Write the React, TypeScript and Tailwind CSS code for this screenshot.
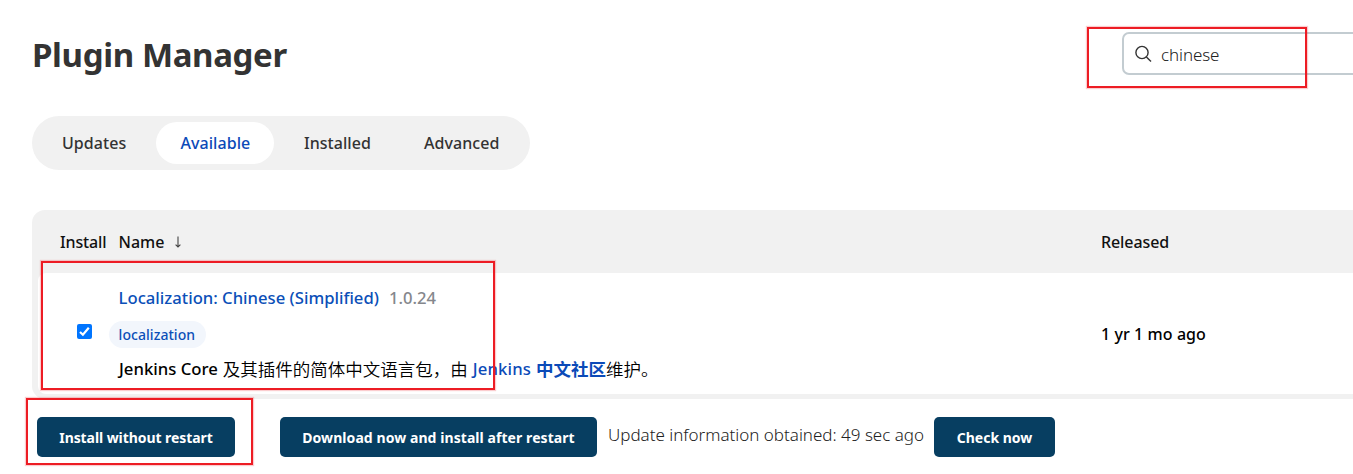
import React from "react";

const tabs = [
  { label: "Updates", active: false, box: "w-[124px] pl-[30px]" },
  { label: "Available", active: true, box: "w-[118px] pl-[24.5px]" },
  { label: "Installed", active: false, box: "w-[125px] pl-[30px]" },
  { label: "Advanced", active: false, box: "w-[131px] pl-[25px]" },
];

function SearchIcon() {
  return (
    <svg className="h-[18px] w-[18px] shrink-0" viewBox="0 0 18 18" fill="none" stroke="#333" strokeWidth="1.4">
      <circle cx="7" cy="7.5" r="6.1" />
      <path d="M11.4 11.9 L16 16.4" />
    </svg>
  );
}

function SortArrow() {
  return (
    <svg className="ml-[10px] h-[12px] w-[8px]" viewBox="0 0 8 12" fill="none" stroke="#444" strokeWidth="1.1">
      <path d="M4 0.5 V11 M1.6 8.6 L4 11 L6.4 8.6" />
    </svg>
  );
}

function CheckBox() {
  return (
    <svg className="h-[15px] w-[15px]" viewBox="0 0 15 15" role="img" aria-label="Selected">
      <rect width="15" height="15" rx="2" fill="#0075ff" />
      <path d="M3 8 L5.9 10.7 L11.8 3.7" fill="none" stroke="#fff" strokeWidth="2.2" />
    </svg>
  );
}

function Button({ children, className }: { children: React.ReactNode; className: string }) {
  return (
    <button className={`flex h-10 shrink-0 items-center justify-center rounded-[5px] bg-[#073e61] text-[14px] font-bold whitespace-nowrap text-white ${className}`}>
      {children}
    </button>
  );
}

function Highlight({ className }: { className: string }) {
  return <div className={`absolute border-2 border-[#ed1c24] shadow-[0_0_1px_1px_rgba(237,28,36,0.22)] ${className}`} />;
}

export default function App() {
  return (
    <div className="relative h-[474px] w-[1353px] overflow-hidden bg-white font-['Noto_Sans','Noto_Sans_CJK_SC',sans-serif] whitespace-nowrap text-[#333]">
      <header className="flex h-[116px] justify-between pl-[32px]">
        <h1 className="pt-[31px] text-[33px] leading-[48px] font-bold tracking-[-0.37px]">Plugin Manager</h1>
        <div className="mt-[32px] -mr-3 flex h-[43px] w-[243px] items-center rounded-[7px] border-2 border-[#c3ccd1] pl-[11px]">
          <SearchIcon />
          <span className="ml-[8px] pt-[2px] text-[17px] font-[350] tracking-[-0.1px] text-[#222]">chinese</span>
        </div>
      </header>

      <nav className="ml-[32px] flex h-[54px] w-[498px] items-center rounded-full bg-[#f1f1f1]">
        {tabs.map((t) => (
          <a key={t.label} className={`flex h-[42px] items-center rounded-full text-[16px] font-medium tracking-[0.05px] ${t.box} ${t.active ? "bg-white text-[#0b4ab8]" : ""}`}>
            {t.label}
          </a>
        ))}
      </nav>

      <section className="mt-[40px] ml-[32px] h-[189px] w-[1400px] rounded-[13px] bg-[#f1f1f1] pb-[5px] text-[16px] font-medium text-black">
        <div className="flex h-[63px] items-center pl-[28px] text-[#111]">
          <span className="w-[58.5px] tracking-[-0.15px]">Install</span>
          <span className="flex w-[982.5px] items-center">Name<SortArrow /></span>
          <span className="tracking-[-0.1px]">Released</span>
        </div>
        <div className="ml-[6px] flex h-[121px] rounded-[8px] bg-white">
          <div className="w-[71px] pt-[51px] pl-[39px]"><CheckBox /></div>
          <div className="w-[992px]">
            <div className="flex h-[50px] items-center pl-[9.6px] text-[16.65px]">
              <a className="text-[#0b4fb8]">Localization: Chinese (Simplified)</a>
              <span className="ml-[10px] text-[#85878c]">1.0.24</span>
            </div>
            <div className="-mt-[2px] flex h-[27px] w-[97px] items-center rounded-full bg-[#f2f6fc] pl-[9.6px] text-[14px] tracking-[0.05px] text-[#0b4fb8]">localization</div>
            <p className="flex h-[42px] items-center pl-[10px] text-[16.7px] leading-[24px]">
              <span>Jenkins Core</span>
              <span className="ml-[5px] text-[17.5px] font-[350]">及其插件的简体中文语言包，由</span>
              <a className="ml-[5px] tracking-[0.15px] text-[#0b4ab8]">Jenkins</a>
              <a className="ml-[5px] text-[17.5px] font-bold text-[#0b4ab8]">中文社区</a>
              <span className="text-[17.5px] font-[350]">维护。</span>
            </p>
          </div>
          <span className="pt-[49px] tracking-[0.08px]">1 yr 1 mo ago</span>
        </div>
      </section>

      <footer className="mt-[18px] flex pl-[37px]">
        <Button className="w-[198px] tracking-[-0.07px]">Install without restart</Button>
        <Button className="ml-[45px] w-[317px] tracking-[0.07px]">Download now and install after restart</Button>
        <span className="ml-[11px] w-[326px] pt-[5px] text-[17px] leading-[26px] font-[350] tracking-[-0.01px] text-[#222]">Update information obtained: 49 sec ago</span>
        <Button className="w-[121px]">Check now</Button>
      </footer>

      <Highlight className="top-[27px] left-[1087px] h-[61px] w-[220px]" />
      <Highlight className="top-[261px] left-[41px] h-[129px] w-[454px]" />
      <Highlight className="top-[398px] left-[26px] h-[67px] w-[227px]" />
    </div>
  );
}
